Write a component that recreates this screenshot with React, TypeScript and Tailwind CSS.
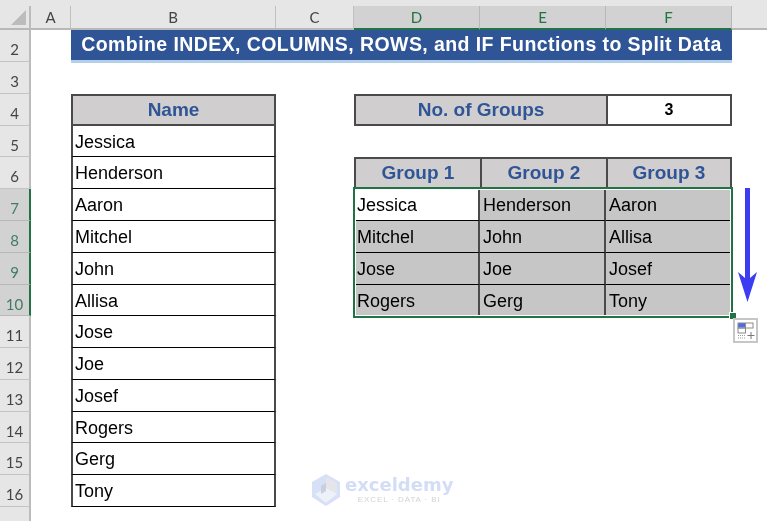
import type { ReactNode } from "react";
const names = ["Jessica","Henderson","Aaron","Mitchel","John","Allisa","Jose","Joe","Josef","Rogers","Gerg","Tony"];
const groups: Record<number,string[]> = {7:["Jessica","Henderson","Aaron"],8:["Mitchel","John","Allisa"],9:["Jose","Joe","Josef"],10:["Rogers","Gerg","Tony"]};
const rows = [2,3,4,5,6,7,8,9,10,11,12,13,14,15,16];
const B = "border-[#4a4a4a]";

function ColHead({label, sel}:{label:string; sel?:boolean}) {
  return <div className={sel
    ? "flex items-center justify-center pt-[1px] font-['Lato',sans-serif] text-[15px] border-r border-[#b8b8b8] border-b-2 border-b-[#217346] bg-[#d2d2d2] text-[#217346]"
    : "flex items-center justify-center pt-[1px] font-['Lato',sans-serif] text-[15px] border-r border-[#c0c0c0] border-b-2 border-b-[#b8b8b8] bg-[#e6e6e6] text-[#444444]"}>{label}</div>;
}
function RowHead({n}:{n:number}) {
  const sel = n>=7 && n<=10;
  return <div className={sel
    ? "col-start-1 flex items-center justify-center pt-2 font-['Lato',sans-serif] text-[15px] border-b border-[#b8b8b8] border-r-2 border-r-[#217346] bg-[#d2d2d2] text-[#3f7d62]"
    : "col-start-1 flex items-center justify-center pt-2 font-['Lato',sans-serif] text-[15px] border-b border-[#c4c4c4] border-r-2 border-r-[#bcbcbc] bg-[#e6e6e6] text-[#444444]"}>{n}</div>;
}
function Head({children, cls}:{children:ReactNode; cls:string}) {
  return <div className={`flex items-center justify-center bg-[#d0cece] border-2 ${B} text-[19px] font-bold text-[#2f5597] ${cls}`}>{children}</div>;
}
function Cell({children, cls, fill}:{children:ReactNode; cls:string; fill?:boolean}) {
  return <div className={`flex items-center pt-[2px] text-[18px] text-black border-b border-b-black border-r-2 border-r-[#4a4a4a] ${fill ? "bg-[#c6c6c6]" : "bg-white"} ${cls}`}>{children}</div>;
}

function Row({n}:{n:number}) {
  const nameIdx = n-5;
  return <>
    <RowHead n={n}/>
    <div/>
    {n===2 && <div className="col-span-5 flex items-center justify-center h-[33px] bg-[#2f5597] border-b-[3px] border-[#b4cfea] text-[19.5px] font-bold tracking-[0.42px] text-white">Combine INDEX, COLUMNS, ROWS, and IF Functions to Split Data</div>}
    {n===4 && <>
      <Head cls="">Name</Head>
      <div/>
      <Head cls="col-span-2 border-r-0 text-[19.25px]">No. of Groups</Head>
      <div className={`flex items-center justify-center border-2 ${B} bg-white text-[16px] font-bold text-black`}>3</div>
    </>}
    {n>=5 && <>
      <Cell cls="border-l-2 border-l-[#4a4a4a] pl-[2px]">{names[nameIdx]}</Cell>
      <div/>
      {n===6 && <>
        <Head cls="border-r-0">Group 1</Head>
        <Head cls="border-r-0">Group 2</Head>
        <Head cls="">Group 3</Head>
      </>}
      {groups[n] && groups[n].map((g,i)=>(
        <Cell key={g} fill={!(n===7&&i===0)} cls={i===0?"border-l-2 border-l-[#4a4a4a] pl-[1px]":"pl-[3px]"}>{g}</Cell>
      ))}
    </>}
  </>;
}

export default function App() {
  return (
    <div className="relative w-[767px] h-[521px] overflow-hidden bg-white blur-[0.35px] font-['Liberation_Sans',Arial,sans-serif]">
      <div className="h-[6px] bg-[#e6e6e6]"/>
      <div className="grid grid-cols-[31px_40px_205px_78px_126px_126px_126px_35px] grid-rows-[24px_32px_32px_32px_31px_32px_32px_32px_32px_31px_32px_32px_32px_31px_32px_32px_14px]">
        <div className="flex items-end justify-end pr-[3px] pb-[3px] bg-[#e6e6e6] border-r-2 border-r-[#bcbcbc] border-b-2 border-b-[#b8b8b8]">
          <svg width="15" height="15" viewBox="0 0 15 15"><polygon points="15,0 15,15 0,15" fill="#bcbcbc"/></svg>
        </div>
        <ColHead label="A"/><ColHead label="B"/><ColHead label="C"/>
        <ColHead label="D" sel/><ColHead label="E" sel/><ColHead label="F" sel/>
        <div className="bg-[#e6e6e6] border-b-2 border-[#b8b8b8]"/>
        {rows.map(n=>(
          <div key={n} className="contents"><Row n={n}/></div>
        ))}
        <div className="col-start-1 bg-[#e6e6e6] border-r-2 border-[#bcbcbc]"/>
      </div>

      {/* selection */}
      <div className="absolute left-[353px] top-[187px] w-[380px] h-[131px] border-2 border-[#217346] shadow-[inset_0_0_0_1px_#ffffff]"/>
      <div className="absolute left-[729px] top-[312px] w-[8px] h-[8px] bg-[#217346] border border-white"/>

      {/* arrow */}
      <svg className="absolute left-[737px] top-[187px]" width="21" height="116" viewBox="0 0 21 116">
        <polygon points="8,1 13,1 13,91 20,85 10.5,115 1,85 8,91" fill="#3c3cf2"/>
      </svg>

      {/* quick analysis */}
      <div className="absolute left-[733px] top-[318px] w-[25px] h-[25px] bg-white border-2 border-[#c6c6c6]">
        <svg width="21" height="21" viewBox="0 0 21 21">
          <rect x="3" y="3" width="7.5" height="4.5" fill="#4a6cf0"/>
          <rect x="3" y="3" width="15" height="5" fill="none" stroke="#8a8a8a"/>
          <rect x="3" y="8" width="7.5" height="5" fill="none" stroke="#8a8a8a"/>
          <line x1="10.5" y1="3" x2="10.5" y2="13" stroke="#8a8a8a"/>
          <line x1="3" y1="15.5" x2="11" y2="15.5" stroke="#9a9a9a" strokeDasharray="1 1"/>
          <line x1="3" y1="18" x2="11" y2="18" stroke="#9a9a9a" strokeDasharray="1 1"/>
          <path d="M16 12v7M12.5 15.5h7" stroke="#777777" fill="none"/>
        </svg>
      </div>

      {/* watermark */}
      <div className="absolute left-[312px] top-[474px] flex items-center gap-[5px]">
        <svg width="28" height="32" viewBox="0 0 28 32">
          <polygon points="14,0 28,8 28,23 14,32 0,23 0,8" fill="#d6e0f6"/>
          <polygon points="14,3 25,9 25,20 14,14" fill="#e6e6ea"/>
          <polygon points="14,14 25,20 14,29 3,20" fill="#eef1fa"/>
          <polygon points="9,12 14,9 14,17 9,20" fill="#c9cfdc"/>
        </svg>
        <div className="flex flex-col items-center -mt-[2px]">
          <span className="font-['DejaVu_Sans',sans-serif] text-[18px] leading-[21px] font-bold text-[#d3def6]">exceldemy</span>
          <span className="font-['Liberation_Sans',sans-serif] text-[8px] leading-[9px] tracking-[0.9px] text-[#cfd2d8]">EXCEL · DATA · BI</span>
        </div>
      </div>
    </div>
  );
}
